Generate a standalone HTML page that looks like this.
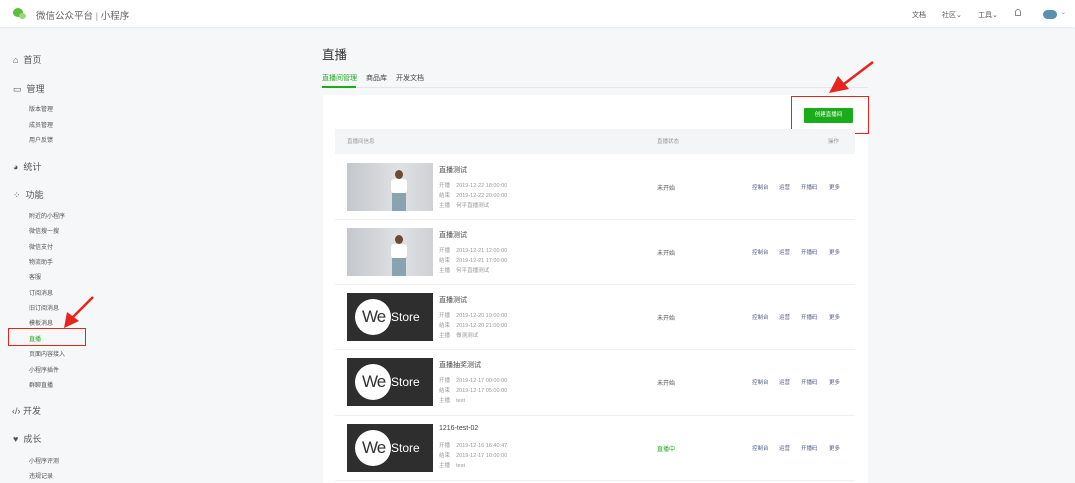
<!DOCTYPE html>
<html><head><meta charset="utf-8"><style>
*{margin:0;padding:0;box-sizing:border-box}
body{width:1075px;height:483px;overflow:hidden;background:#f6f7f8;font-family:"Liberation Sans","Noto Sans CJK SC",sans-serif;color:#333;position:relative}
.a{position:absolute;white-space:nowrap}
.hdr{position:absolute;left:0;top:0;width:1075px;height:27px;background:#fff;box-shadow:0 1px 2px rgba(0,0,0,.06)}
.s{font-size:6px;color:#555}
.m{font-size:9px;color:#555}
.img{position:absolute;width:86px;height:48px;overflow:hidden}
.ph{background:linear-gradient(90deg,#c4c7cb,#dfe1e4 60%,#cfd2d5)}
.ph .hd{position:absolute;left:48px;top:7px;width:8px;height:9px;border-radius:50%;background:#6b4a36}
.ph .bd{position:absolute;left:44px;top:16px;width:16px;height:14px;background:#fff;border-radius:3px}
.ph .sk{position:absolute;left:45px;top:30px;width:14px;height:18px;background:#8aa3b3}
.ws{background:#2e2e2e}
.ws i{position:absolute;left:8px;top:6px;width:36px;height:36px;border-radius:50%;background:#fff}
.ws b{position:absolute;left:15px;top:14px;font:400 17px "Liberation Sans",sans-serif;color:#333;letter-spacing:-1px}
.ws em{position:absolute;left:44px;top:17px;font:normal 12px "Liberation Sans",sans-serif;color:#fff}
.t{font-size:7px;color:#444}
.g{font-size:5.5px;color:#999;line-height:10px}
.lk{font-size:5.5px;color:#4d5b8a}
</style></head><body>
<div class="hdr"></div>
<div class="a" style="left:13px;top:8px;width:10px;height:9px;border-radius:50%;background:#5cbf3a"></div>
<div class="a" style="left:19px;top:13px;width:7px;height:6px;border-radius:50%;background:#9ad680"></div>
<div class="a" style="left:36px;top:8px;font-size:9.5px;color:#666">微信公众平台 <span style="color:#999">|</span> 小程序</div>
<div class="a" style="left:912px;top:10px;font-size:7px;color:#555">文档</div>
<div class="a" style="left:942px;top:10px;font-size:7px;color:#555">社区⌄</div>
<div class="a" style="left:978px;top:10px;font-size:7px;color:#555">工具⌄</div>
<div class="a" style="left:1015px;top:9px;width:6px;height:7px;border:1px solid #888;border-radius:3px 3px 0 0"></div>
<div class="a" style="left:1043px;top:10px;width:14px;height:9px;border-radius:5px;background:#5b8fae"></div>
<div class="a" style="left:1061px;top:9px;font-size:6px;color:#888">⌄</div>

<div class="a m" style="left:13px;top:53px">⌂ &nbsp;首页</div>
<div class="a m" style="left:13px;top:82px">▭ &nbsp;管理</div>
<div class="a s" style="left:29px;top:104px">版本管理</div>
<div class="a s" style="left:29px;top:120px">成员管理</div>
<div class="a s" style="left:29px;top:135px">用户反馈</div>
<div class="a m" style="left:13px;top:160px">◕ &nbsp;统计</div>
<div class="a m" style="left:13px;top:188px">⁘ &nbsp;功能</div>
<div class="a s" style="left:29px;top:211px">附近的小程序</div>
<div class="a s" style="left:29px;top:226px">微信搜一搜</div>
<div class="a s" style="left:29px;top:242px">微信支付</div>
<div class="a s" style="left:29px;top:257px">物流助手</div>
<div class="a s" style="left:29px;top:272px">客服</div>
<div class="a s" style="left:29px;top:288px">订阅消息</div>
<div class="a s" style="left:29px;top:303px">旧订阅消息</div>
<div class="a s" style="left:29px;top:318px">模板消息</div>
<div class="a s" style="left:29px;top:334px;color:#1aad19">直播</div>
<div class="a s" style="left:29px;top:349px">页面内容接入</div>
<div class="a s" style="left:29px;top:365px">小程序插件</div>
<div class="a s" style="left:29px;top:380px">群聊直播</div>
<div class="a m" style="left:12px;top:404px">‹/› 开发</div>
<div class="a m" style="left:13px;top:432px">♥ &nbsp;成长</div>
<div class="a s" style="left:29px;top:456px">小程序评测</div>
<div class="a s" style="left:29px;top:471px">违规记录</div>
<div class="a" style="left:8px;top:328px;width:78px;height:18px;border:1.5px solid #e8231b"></div>
<svg class="a" style="left:55px;top:295px" width="42" height="38"><path d="M38 2 L17 23" stroke="#e8231b" stroke-width="2.5"/><path d="M9 33 L12 17 L24 26 Z" fill="#e8231b"/></svg>

<div class="a" style="left:322px;top:44px;font-size:12.5px;color:#333">直播</div>
<div class="a" style="left:322px;top:73px;font-size:7px;color:#1aad19">直播间管理</div>
<div class="a" style="left:366px;top:73px;font-size:7px;color:#444">商品库</div>
<div class="a" style="left:396px;top:73px;font-size:7px;color:#444">开发文档</div>
<div class="a" style="left:322px;top:87px;width:546px;height:1px;background:#e6e6e6"></div>
<div class="a" style="left:322px;top:86px;width:34px;height:2px;background:#1aad19"></div>
<div class="a" style="left:323px;top:95px;width:545px;height:388px;background:#fff"></div>
<div class="a" style="left:804px;top:108px;width:49px;height:15px;background:#1aad19;border-radius:1px;color:#fff;font-size:5.5px;text-align:center;line-height:15px">创建直播间</div>
<div class="a" style="left:791px;top:96px;width:78px;height:38px;border:1.5px solid #e8231b"></div>
<svg class="a" style="left:820px;top:58px" width="58" height="40"><path d="M53 4 L24 26" stroke="#e8231b" stroke-width="2.5"/><path d="M9 35 L18 18 L29 31 Z" fill="#e8231b"/></svg>
<div class="a" style="left:335px;top:129px;width:520px;height:25px;background:#f4f5f6"></div>
<div class="a g" style="left:347px;top:137px">直播间信息</div>
<div class="a g" style="left:657px;top:137px">直播状态</div>
<div class="a g" style="left:828px;top:137px">操作</div>

<div class="img ph" style="left:347px;top:163px"><i class="hd"></i><i class="bd"></i><i class="sk"></i></div>
<div class="img ph" style="left:347px;top:228px"><i class="hd"></i><i class="bd"></i><i class="sk"></i></div>
<div class="img ws" style="left:347px;top:293px"><i></i><b>We</b><em>Store</em></div>
<div class="img ws" style="left:347px;top:358px"><i></i><b>We</b><em>Store</em></div>
<div class="img ws" style="left:347px;top:424px"><i></i><b>We</b><em>Store</em></div>

<div class="a" style="left:335px;top:219px;width:520px;height:1px;background:#f0f0f0"></div>
<div class="a" style="left:335px;top:284px;width:520px;height:1px;background:#f0f0f0"></div>
<div class="a" style="left:335px;top:349px;width:520px;height:1px;background:#f0f0f0"></div>
<div class="a" style="left:335px;top:415px;width:520px;height:1px;background:#f0f0f0"></div>
<div class="a" style="left:335px;top:480px;width:520px;height:1px;background:#f0f0f0"></div>

<div class="a t" style="left:439px;top:165px">直播测试</div>
<div class="a g" style="left:439px;top:181px">开播 &nbsp;&nbsp;&nbsp;2019-12-22 18:00:00<br>结束 &nbsp;&nbsp;&nbsp;2019-12-22 20:00:00<br>主播 &nbsp;&nbsp;&nbsp;何平直播测试</div>
<div class="a t" style="left:439px;top:230px">直播测试</div>
<div class="a g" style="left:439px;top:246px">开播 &nbsp;&nbsp;&nbsp;2019-12-21 12:00:00<br>结束 &nbsp;&nbsp;&nbsp;2019-12-21 17:00:00<br>主播 &nbsp;&nbsp;&nbsp;何平直播测试</div>
<div class="a t" style="left:439px;top:295px">直播测试</div>
<div class="a g" style="left:439px;top:311px">开播 &nbsp;&nbsp;&nbsp;2019-12-20 19:00:00<br>结束 &nbsp;&nbsp;&nbsp;2019-12-20 21:00:00<br>主播 &nbsp;&nbsp;&nbsp;做测测试</div>
<div class="a t" style="left:439px;top:360px">直播抽奖测试</div>
<div class="a g" style="left:439px;top:376px">开播 &nbsp;&nbsp;&nbsp;2019-12-17 00:00:00<br>结束 &nbsp;&nbsp;&nbsp;2019-12-17 05:00:00<br>主播 &nbsp;&nbsp;&nbsp;test</div>
<div class="a t" style="left:439px;top:425px">1216-test-02</div>
<div class="a g" style="left:439px;top:441px">开播 &nbsp;&nbsp;&nbsp;2019-12-16 16:40:47<br>结束 &nbsp;&nbsp;&nbsp;2019-12-17 10:00:00<br>主播 &nbsp;&nbsp;&nbsp;test</div>

<div class="a s" style="left:657px;top:183px">未开始</div>
<div class="a s" style="left:657px;top:248px">未开始</div>
<div class="a s" style="left:657px;top:313px">未开始</div>
<div class="a s" style="left:657px;top:378px">未开始</div>
<div class="a s" style="left:657px;top:444px;color:#1aad19">直播中</div>

<div class="a lk" style="left:752px;top:183px">控制台</div><div class="a lk" style="left:779px;top:183px">运营</div><div class="a lk" style="left:801px;top:183px">开播码</div><div class="a lk" style="left:829px;top:183px">更多</div>
<div class="a lk" style="left:752px;top:248px">控制台</div><div class="a lk" style="left:779px;top:248px">运营</div><div class="a lk" style="left:801px;top:248px">开播码</div><div class="a lk" style="left:829px;top:248px">更多</div>
<div class="a lk" style="left:752px;top:313px">控制台</div><div class="a lk" style="left:779px;top:313px">运营</div><div class="a lk" style="left:801px;top:313px">开播码</div><div class="a lk" style="left:829px;top:313px">更多</div>
<div class="a lk" style="left:752px;top:378px">控制台</div><div class="a lk" style="left:779px;top:378px">运营</div><div class="a lk" style="left:801px;top:378px">开播码</div><div class="a lk" style="left:829px;top:378px">更多</div>
<div class="a lk" style="left:752px;top:444px">控制台</div><div class="a lk" style="left:779px;top:444px">运营</div><div class="a lk" style="left:801px;top:444px">开播码</div><div class="a lk" style="left:829px;top:444px">更多</div>
</body></html>
